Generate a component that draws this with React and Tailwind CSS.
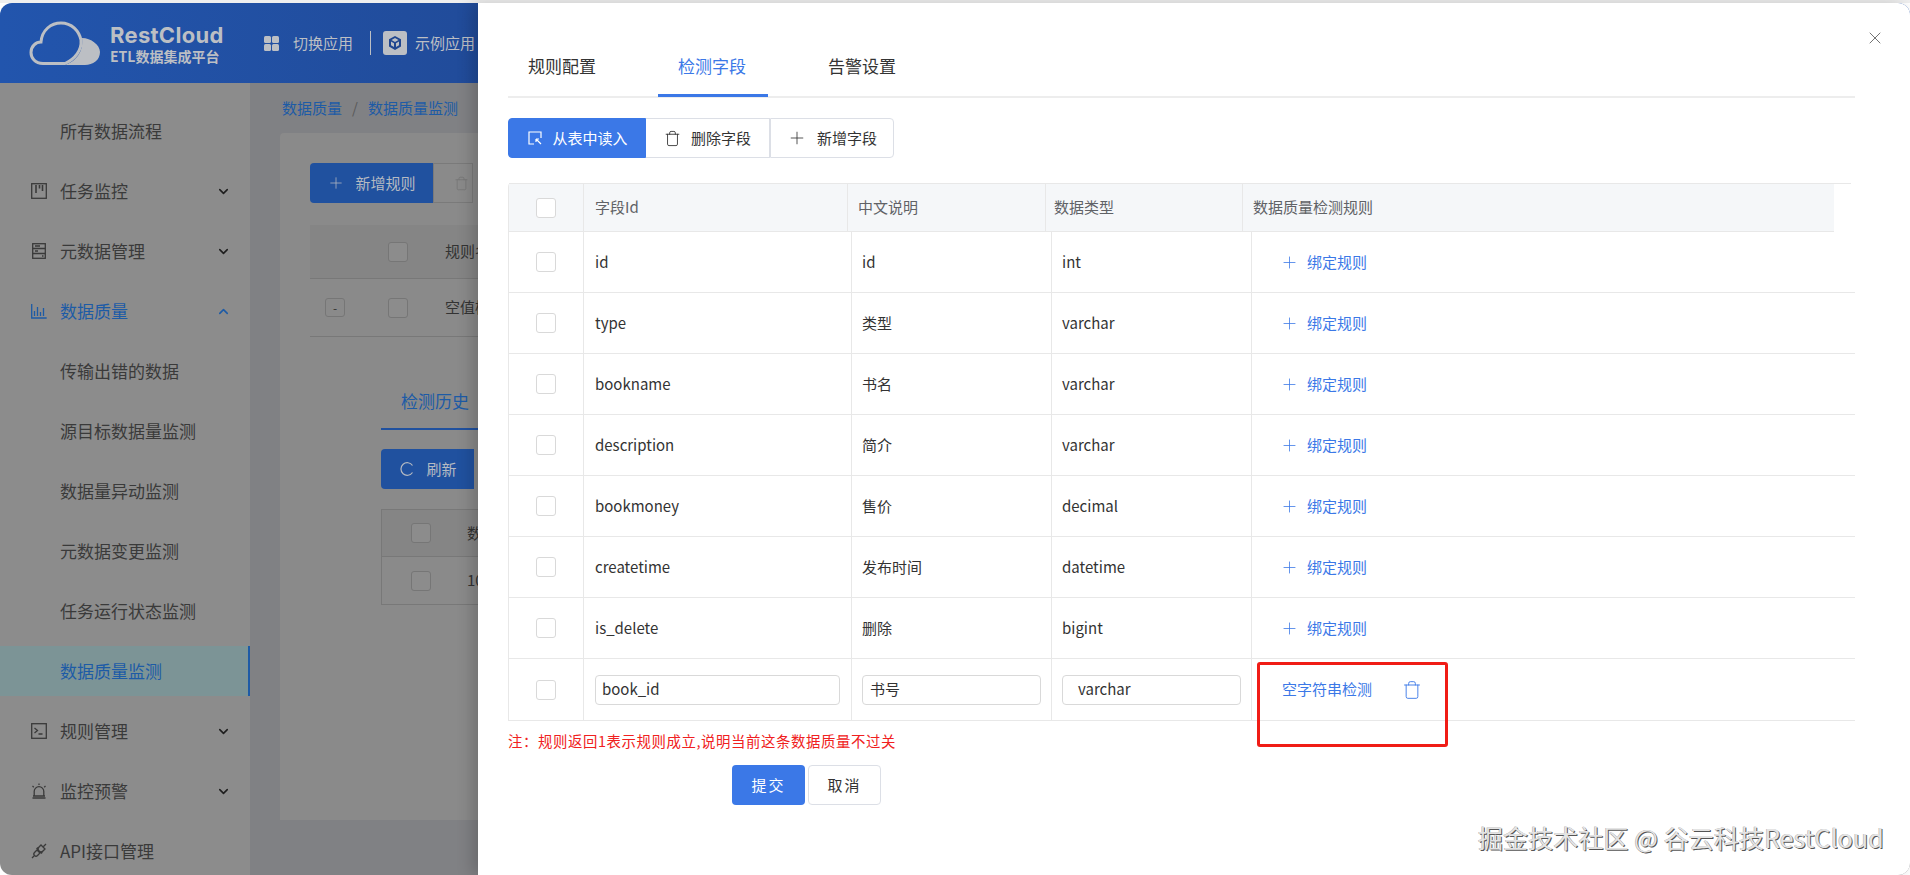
import React from 'react';
import { ChevronDown, ChevronUp, Plus, Trash, X } from 'lucide-react';

const menuTop = ['传输出错的数据', '源目标数据量监测', '数据量异动监测', '元数据变更监测', '任务运行状态监测'];

const fields = [
    ['id', 'id', 'int'],
    ['type', '类型', 'varchar'],
    ['bookname', '书名', 'varchar'],
    ['description', '简介', 'varchar'],
    ['bookmoney', '售价', 'decimal'],
    ['createtime', '发布时间', 'datetime'],
    ['is_delete', '删除', 'bigint'],
];

function CloudLogo() {
    return (
        <svg width="72" height="46" viewBox="0 0 72 46" fill="none">
            <path d="M53 18C62 18 71 25 71 32C71 40 64 45 56 45H36C46 42 55 32 53 18Z" fill="#bcbfc4" />
            <path d="M14 43.500C6 43.500 2 38 2 32.500C2 26 7 22 12 22C13 10 22 3 32 3C43 3 50 11 52 20C53 30 46 39 36 43.500Z" stroke="#bcbfc4" strokeWidth="3" />
        </svg>
    );
}

function MonitorIcon() {
    return (
        <svg width="16" height="16" viewBox="0 0 16 16" fill="none" stroke="currentColor" strokeWidth="1.3">
            <rect x="0.7" y="0.7" width="14.6" height="14.6" />
            <path d="M5 2v8M8.500 2v3.500M11.500 2v6" strokeWidth="1.6" />
        </svg>
    );
}

function MetaIcon() {
    return (
        <svg width="16" height="16" viewBox="0 0 16 16" fill="none" stroke="currentColor" strokeWidth="1.3">
            <rect x="1.700" y="0.700" width="12.600" height="14.600" />
            <path d="M1.700 5.500h12.600M1.700 10.500h12.600M4 3h5M4 8h3M11 13h1.500" />
        </svg>
    );
}

function ChartIcon() {
    return (
        <svg width="16" height="16" viewBox="0 0 16 16" fill="none" stroke="currentColor" strokeWidth="1.3">
            <path d="M0.700 1v14h15M3.500 13V8M6.500 13V4M9.500 13V9M12.500 13V5" />
        </svg>
    );
}

function TerminalIcon() {
    return (
        <svg width="16" height="16" viewBox="0 0 16 16" fill="none" stroke="currentColor" strokeWidth="1.3">
            <rect x="0.700" y="0.700" width="14.600" height="14.600" />
            <path d="M3.500 5l3 2.500-3 2.500M7.500 11h4" />
        </svg>
    );
}

function AlarmIcon() {
    return (
        <svg width="16" height="16" viewBox="0 0 16 16" fill="none" stroke="currentColor" strokeWidth="1.3">
            <path d="M3.200 13V8.500a4.800 4.800 0 0 1 9.600 0V13M1.500 15h13M2 13h12M8 0.500v1.500M1.500 3l1.300 1.200M14.500 3l-1.300 1.200" />
        </svg>
    );
}

function PlugIcon() {
    return (
        <svg width="16" height="16" viewBox="0 0 16 16" fill="none" stroke="currentColor" strokeWidth="1.3">
            <path d="M10 2l4 4-2 2a2.800 2.800 0 0 1-4-4zM6 7l3 3-2.500 2.500a2.100 2.100 0 0 1-3-3zM15 1l-2.500 2.500M1 15l2-2M5.500 6l1.500-1.500M10 10.500l1.500-1.500" />
        </svg>
    );
}

function ReadIcon() {
    return (
        <svg width="14" height="14" viewBox="0 0 14 14" fill="none" stroke="currentColor" strokeWidth="1.2">
            <path d="M6 13H1V1h12v6M8 8l5 5M8 8h3M8 8v3" />
        </svg>
    );
}

function GridIcon() {
    return (
        <svg width="15" height="15" viewBox="0 0 15 15" fill="#bcbfc4">
            <rect x="0" y="0" width="7" height="7" rx="1.5" />
            <rect x="8" y="0" width="7" height="7" rx="1.5" />
            <rect x="0" y="8" width="7" height="7" rx="1.5" />
            <rect x="8" y="8" width="7" height="7" rx="1.5" />
        </svg>
    );
}

function CubeIcon() {
    return (
        <svg width="14" height="14" viewBox="0 0 14 14" fill="#20468f">
            <path d="M7 0l6 3.200v7.200L7 14l-6-3.600V3.200zM7 6l3.500-2L7 2 3.500 4zM3 5.500v3.800l3 1.800V7.300zM11 5.500L8 7.300v3.800l3-1.800z" fillRule="evenodd" />
        </svg>
    );
}

function RefreshIcon() {
    return (
        <svg width="14" height="14" viewBox="0 0 14 14" fill="none" stroke="#b5bac2" strokeWidth="1.2">
            <path d="M12.500 3.500A6.300 6.300 0 1 0 12.500 10.500" />
        </svg>
    );
}

function NavItem({ icon, label, open }) {
    return (
        <div className={`h-[60px] flex items-center pl-[31px] pr-[19px] ${open ? 'text-[#1d5ba6]' : 'text-[#3a3a3a]'}`}>
            <span className="w-[29px] shrink-0">{icon}</span>
            <span className="flex-1 text-[17px]">{label}</span>
            {open ? <ChevronUp size={15} strokeWidth={2.5} /> : <ChevronDown size={15} strokeWidth={2.5} className="text-[#1f1f1f]" />}
        </div>
    );
}

function SubItem({ label, active }) {
    if (active) {
        return (
            <div className="my-[5px] h-[50px] flex items-center pl-[60px] text-[17px] text-[#1d5ba6] bg-[#7c9496] border-r-2 border-[#1d5ba6]">
                {label}
            </div>
        );
    }
    return <div className="h-[60px] flex items-center pl-[60px] text-[17px] text-[#3a3a3a]">{label}</div>;
}

function DimBox({ className }) {
    return <span className={`block w-5 h-5 shrink-0 rounded-[3px] border border-[#767676] bg-[#8c8c8c] ${className || ''}`} />;
}

function Background() {
    return (
        <div className="h-full flex flex-col rounded-[12px] overflow-hidden">
            <header className="h-20 shrink-0 bg-linear-to-r from-[#2255ad] via-[#20468f] via-40% to-[#2257b0] flex items-center text-[#bcbfc4]">
                <div className="w-[264px] shrink-0 flex items-center pl-[29px]">
                    <CloudLogo />
                    <div className="ml-[9px] font-bold">
                        <div className="text-[22px] leading-[26px] tracking-[0.3px] font-['Inter',sans-serif]">RestCloud</div>
                        <div className="text-[14px] leading-[17px] whitespace-nowrap">ETL数据集成平台</div>
                    </div>
                </div>
                <GridIcon />
                <span className="ml-[14px] text-[15px]">切换应用</span>
                <span className="ml-[17px] w-px h-6 bg-[#bcbfc4]" />
                <span className="ml-[12px] w-6 h-6 rounded-[3px] bg-[#bcbfc4] flex items-center justify-center"><CubeIcon /></span>
                <span className="ml-[8px] text-[15px] whitespace-nowrap">示例应用</span>
            </header>
            <div className="flex-1 flex min-h-0">
                <aside className="w-[250px] shrink-0 bg-[#8c8c8c] pt-[18px] overflow-hidden">
                    <div className="h-[60px] flex items-center pl-[60px] text-[17px] text-[#3a3a3a]">所有数据流程</div>
                    <NavItem icon={<MonitorIcon />} label="任务监控" />
                    <NavItem icon={<MetaIcon />} label="元数据管理" />
                    <NavItem icon={<ChartIcon />} label="数据质量" open />
                    {menuTop.map((m) => <SubItem key={m} label={m} />)}
                    <SubItem label="数据质量监测" active />
                    <NavItem icon={<TerminalIcon />} label="规则管理" />
                    <NavItem icon={<AlarmIcon />} label="监控预警" />
                    <div className="h-[60px] flex items-center pl-[31px] text-[#3a3a3a]">
                        <span className="w-[29px] shrink-0"><PlugIcon /></span>
                        <span className="text-[17px]">API接口管理</span>
                    </div>
                </aside>
                <main className="flex-1 bg-[#808184] pl-[30px] overflow-hidden">
                    <div className="h-[50px] flex items-center pl-[2px] text-[15px] text-[#1d5ba6]">
                        <span>数据质量</span>
                        <span className="mx-[10px] text-[#5a5a5a]">/</span>
                        <span>数据质量监测</span>
                    </div>
                    <div className="h-[687px] bg-[#8a8a8a] rounded-tl-[4px] pt-[30px] pl-[30px]">
                        <div className="flex items-center">
                            <div className="w-[123px] h-10 rounded-l-[4px] bg-[#20519f] text-[#b5bac2] text-[15px] flex items-center justify-center gap-[10px]">
                                <Plus size={18} strokeWidth={1} />
                                新增规则
                            </div>
                            <div className="w-10 h-10 border border-[#7a7a7a] flex items-center pl-5 text-[#757575]"><Trash size={15} strokeWidth={1.25} /></div>
                        </div>
                        <div className="mt-[22px] h-[54px] bg-[#858585] border-b border-[#787878] flex items-center pl-[78px]">
                            <DimBox />
                            <span className="ml-[37px] text-[15px] text-[#333] whitespace-nowrap">规则名</span>
                        </div>
                        <div className="h-[58px] border-b border-[#787878] flex items-center pl-[15px]">
                            <span className="w-5 h-[19px] border border-[#767676] rounded-[3px] flex items-center justify-center text-[12px] text-[#333]">-</span>
                            <DimBox className="ml-[43px]" />
                            <span className="ml-[37px] text-[15px] text-[#333] whitespace-nowrap">空值检测</span>
                        </div>
                        <div className="pl-[71px]">
                            <div className="mt-[52px] h-[39px] w-[97px] text-[17px] text-[#1d5ba6] pl-[20px] leading-[24px]">检测历史</div>
                            <div className="h-[2px] w-[97px] bg-[#20519f]" />
                            <div className="mt-[19px] w-[93px] h-10 rounded-l-[4px] bg-[#20519f] text-[#b5bac2] text-[15px] flex items-center justify-center gap-[12px] pl-[2px]">
                                <RefreshIcon />
                                刷新
                            </div>
                            <div className="mt-[20px] h-12 bg-[#858585] border border-[#787878] flex items-center pl-[29px]">
                                <DimBox />
                                <span className="ml-[36px] text-[15px] text-[#333]">数据</span>
                            </div>
                            <div className="h-12 border-x border-b border-[#787878] flex items-center pl-[29px]">
                                <DimBox />
                                <span className="ml-[36px] text-[15px] text-[#333]">10</span>
                            </div>
                        </div>
                    </div>
                </main>
            </div>
        </div>
    );
}

function Button({ icon, label, primary, className }) {
    return (
        <button className={`h-10 flex items-center justify-center gap-[10px] text-[15px] border ${primary ? 'bg-[#3b78e7] border-[#3b78e7] text-white' : 'bg-white border-[#dcdfe6] text-[#333]'} ${className}`}>
            {icon}
            {label}
        </button>
    );
}

function Cell({ children, className }) {
    return <div className={`flex items-center h-full text-[15px] text-[#333] border-l border-[#e8e8e8] ${className || ''}`}>{children}</div>;
}

function CheckCell() {
    return (
        <div className="flex items-center justify-center h-full">
            <span className="w-5 h-5 rounded-[3px] border border-[#d9d9d9] bg-white" />
        </div>
    );
}

function TableInput({ value, className }) {
    return <div className={`h-[30px] flex items-center border border-[#d9d9d9] rounded-[4px] text-[15px] text-[#333] ${className}`}>{value}</div>;
}

function FieldRow({ row }) {
    return (
        <div className="h-[61px] grid grid-cols-[74px_268px_200px_200px_1fr] border-b border-[#e8e8e8]">
            <CheckCell />
            <Cell className="pl-[11px]">{row[0]}</Cell>
            <Cell className="pl-[10px]">{row[1]}</Cell>
            <Cell className="pl-[10px]">{row[2]}</Cell>
            <Cell className="pl-[28px]">
                <Plus size={19} strokeWidth={1} className="text-[#3b78e7]" />
                <span className="ml-[8px] text-[#3b78e7]">绑定规则</span>
            </Cell>
        </div>
    );
}

function Drawer() {
    return (
        <div className="absolute top-[3px] right-0 bottom-0 w-[1432px] bg-white rounded-r-[12px] shadow-[-6px_0_16px_rgba(0,0,0,0.18)] pl-[30px] pr-[55px]">
            <div className="absolute top-[25px] right-[25px] text-[#666]">
                <X size={20} strokeWidth={1.1} />
            </div>
            <div className="h-[95px] flex items-end border-b-2 border-[#ededed] text-[17px] text-[#333]">
                <div className="h-[95px] flex">
                    <div className="pl-5 w-[150px] pt-[52px]">规则配置</div>
                    <div className="w-[110px] pt-[52px] pr-[2px] text-center text-[#3b78e7] border-b-[3px] border-[#3b78e7] h-[96px]">检测字段</div>
                    <div className="pl-[60px] pt-[52px]">告警设置</div>
                </div>
            </div>
            <div className="mt-[20px] flex">
                <Button primary icon={<ReadIcon />} label="从表中读入" className="w-[138px] rounded-l-[4px] pl-[2px]" />
                <Button icon={<Trash size={17} strokeWidth={1.25} />} label="删除字段" className="w-[124px] border-l-0" />
                <Button icon={<Plus size={20} strokeWidth={1} />} label="新增字段" className="w-[124px] rounded-r-[4px]" />
            </div>
            <div className="mt-[25px] border-l border-[#e8e8e8] rounded-tl-[4px]">
                <div className="h-[49px] mr-[4px] border-t border-[#e8e8e8]">
                    <div className="h-full w-[1325px] bg-[#f5f7f9] border-b border-[#e8e8e8] grid grid-cols-[74px_264px_198px_197px_1fr]">
                        <CheckCell />
                        <Cell className="pl-[11px]"><span className="text-[#606266]">字段Id</span></Cell>
                        <Cell className="pl-[10px]"><span className="text-[#606266]">中文说明</span></Cell>
                        <Cell className="pl-[8px]"><span className="text-[#606266]">数据类型</span></Cell>
                        <Cell className="pl-[10px]"><span className="text-[#606266]">数据质量检测规则</span></Cell>
                    </div>
                </div>
                {fields.map((row) => <FieldRow key={row[0]} row={row} />)}
                <div className="h-[62px] grid grid-cols-[74px_268px_200px_200px_1fr] border-b border-[#e8e8e8]">
                    <CheckCell />
                    <Cell className="px-[11px]"><TableInput value="book_id" className="w-full pl-[6px]" /></Cell>
                    <Cell className="px-[10px]"><TableInput value="书号" className="w-full pl-[7px]" /></Cell>
                    <Cell className="px-[10px]"><TableInput value="varchar" className="w-full pl-[15px]" /></Cell>
                    <Cell className="pl-[30px]">
                        <span className="text-[#3b78e7] whitespace-nowrap">空字符串检测</span>
                        <Trash size={20} strokeWidth={1.1} className="ml-[30px] text-[#3b78e7]" />
                    </Cell>
                </div>
            </div>
            <p className="mt-[10px] text-[14.4px] tracking-[0.6px] leading-[20px] text-[#f02020]">注：规则返回1表示规则成立,说明当前这条数据质量不过关</p>
            <div className="mt-[14px] ml-[224px] flex gap-[3px]">
                <button className="w-[73px] h-10 rounded-[4px] bg-[#3b78e7] text-white text-[15px] tracking-[2px]">提交</button>
                <button className="w-[73px] h-10 rounded-[4px] border border-[#dcdfe6] bg-white text-[#333] text-[15px] tracking-[2px]">取消</button>
            </div>
            {/* 截图上的红框标注 */}
            <div className="absolute left-[779px] top-[659px] w-[191px] h-[85px] border-[3px] border-[#f01c16] rounded-[3px]" />
        </div>
    );
}

export default function App() {
    return (
        <div className="relative w-[1910px] h-[875px] overflow-hidden bg-white pt-[3px] font-['Noto_Sans_CJK_SC',sans-serif]">
            <div className="absolute inset-x-0 top-0 h-[3px] bg-[#efefef]" />
            <Background />
            <Drawer />
            <div className="absolute left-[1478px] top-[819px] text-[25px] tracking-[0.1px] leading-[36px] text-[#e4e4e4] whitespace-nowrap [text-shadow:1px_1px_0_#555,-0.5px_-0.5px_0_#aaa]">
                掘金技术社区 @ 谷云科技RestCloud
            </div>
        </div>
    );
}
